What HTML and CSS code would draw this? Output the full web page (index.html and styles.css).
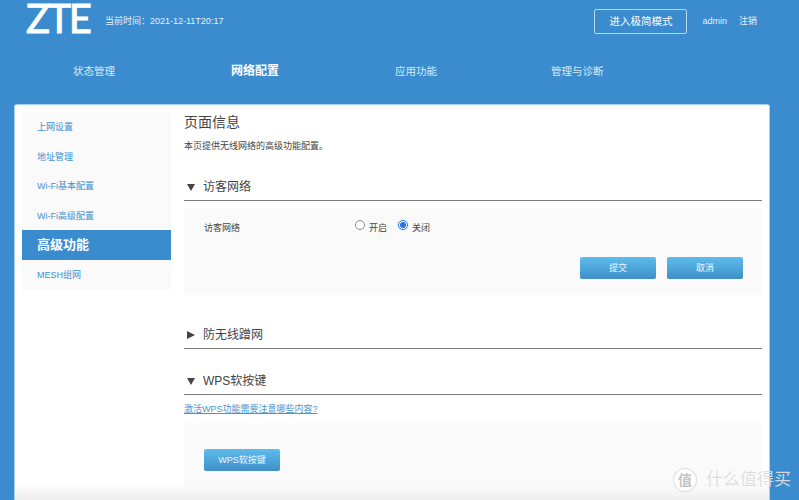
FILE: index.html
```html
<!DOCTYPE html>
<html lang="zh">
<head>
<meta charset="utf-8">
<title>ZTE</title>
<link rel="stylesheet" href="styles.css">
</head>
<body>
<div class="page">
  <header class="header">
    <div class="topbar">
      <div class="brand">
        <span class="logo">ZTE</span>
        <span class="time">当前时间：2021-12-11T20:17</span>
      </div>
      <div class="account">
        <span class="mode-btn">进入极简模式</span>
        <span class="user">admin</span>
        <span class="logout">注销</span>
      </div>
    </div>
    <nav class="nav">
      <span class="nav-item nav-1">状态管理</span>
      <span class="nav-item nav-2">网络配置</span>
      <span class="nav-item nav-3">应用功能</span>
      <span class="nav-item nav-4">管理与诊断</span>
    </nav>
  </header>
  <main class="card">
    <aside class="side">
      <a class="side-item">上网设置</a>
      <a class="side-item">地址管理</a>
      <a class="side-item">Wi-Fi基本配置</a>
      <a class="side-item">Wi-Fi高级配置</a>
      <a class="side-item current">高级功能</a>
      <a class="side-item">MESH组网</a>
    </aside>
    <section class="content">
      <h1 class="title">页面信息</h1>
      <p class="desc">本页提供无线网络的高级功能配置。</p>

      <h2 class="sec-head first"><span class="caret down"></span>访客网络</h2>
      <div class="panel guest">
        <div class="row">
          <span class="row-label">访客网络</span>
          <span class="radios">
            <span class="radio-wrap"><span class="radio"></span>开启</span>
            <span class="radio-wrap"><span class="radio on"></span>关闭</span>
          </span>
        </div>
        <div class="actions">
          <span class="btn">提交</span>
          <span class="btn">取消</span>
        </div>
      </div>

      <h2 class="sec-head second"><span class="caret right"></span>防无线蹭网</h2>

      <h2 class="sec-head third"><span class="caret down"></span>WPS软按键</h2>
      <a class="help">激活WPS功能需要注意哪些内容?</a>
      <div class="panel wps">
        <span class="btn">WPS软按键</span>
      </div>
    </section>
  </main>
  <div class="fade"></div>
  <div class="watermark"><span class="wm-badge">值</span><span class="wm-text">什么值得买</span></div>
</div>
</body>
</html>
```
FILE: styles.css
```css
* { box-sizing: border-box; }
html, body { margin: 0; height: 100%; overflow: hidden; }
body {
  background: #3a8ccf;
  font-family: "Liberation Sans", "Noto Sans CJK SC", sans-serif;
  color: #444;
}
.page { position: relative; width: 799px; height: 500px; overflow: hidden; }

.header { height: 105px; color: #fff; }
.topbar {
  height: 42px;
  display: flex;
  justify-content: space-between;
  padding: 0 42px 0 26px;
}
.brand { display: flex; align-items: flex-start; }
.logo {
  font-family: Lato, sans-serif;
  font-size: 40px;
  line-height: 36px;
  letter-spacing: -2.5px;
  width: 79px;
  font-weight: 400;
  -webkit-text-stroke: 0.9px #fff;
}
.time { font-size: 9px; line-height: 11px; margin-top: 16px; color: #e6f0f8; }
.account { display: flex; align-items: flex-start; font-size: 9px; line-height: 11px; }
.mode-btn {
  width: 93px;
  height: 25px;
  margin-top: 9px;
  margin-right: 15px;
  border: 1px solid #b9d8f0;
  border-radius: 2px;
  font-size: 10.5px;
  line-height: 23px;
  text-align: center;
}
.user { margin-top: 16px; margin-right: 12px; color: #e6f0f8; }
.logout { margin-top: 16px; color: #e6f0f8; }

.nav { display: flex; height: 63px; padding-top: 22px; font-size: 10.5px; line-height: 14px; color: #dbe9f5; }
.nav-item { display: block; }
.nav-1 { margin-left: 73px; }
.nav-2 { margin-left: 116px; font-size: 12px; font-weight: 700; color: #fff; }
.nav-3 { margin-left: 116px; }
.nav-4 { margin-left: 114px; }

.card {
  display: flex;
  margin-left: 14px;
  width: 756px;
  height: 395px;
  padding: 7px 8px 0;
  gap: 13px;
  background: #fff;
  border-radius: 3px 3px 0 0;
  box-shadow: inset 1px 0 0 #a5d2f0, inset -1px 0 0 #a5d2f0, 0 -1px 0 #a5d2f0;
}
.side {
  width: 149px;
  height: 178px;
  flex: none;
  background: #fafafa;
  display: flex;
  flex-direction: column;
}
.side-item {
  height: 29.5px;
  padding-left: 15px;
  padding-top: 1px;
  font-size: 9px;
  line-height: 29px;
  color: #3f8fd0;
}
.side-item.current {
  padding-top: 0;
  background: #3a8ccf;
  color: #fff;
  font-size: 13px;
  line-height: 29.5px;
  font-weight: 700;
}
.content { width: 578px; }
.title { margin: 0; font-size: 14px; line-height: 20px; font-weight: 400; color: #444; }
.desc { margin: 8px 0 0; font-size: 9px; line-height: 13px; color: #444; }
.sec-head {
  margin: 0;
  height: 24px;
  display: flex;
  align-items: flex-start;
  font-size: 12px;
  line-height: 20px;
  font-weight: 400;
  color: #444;
  border-bottom: 1px solid #7c7c7c;
}
.sec-head.first { margin-top: 24px; }
.sec-head.second { margin-top: 30px; }
.sec-head.third { margin-top: 22px; }
.caret {
  width: 8px;
  height: 7px;
  margin: 7px 8px 0 3px;
  background: #444;
}
.caret.down { clip-path: polygon(0 0, 100% 0, 50% 100%); }
.caret.right { height: 8px; margin-top: 6px; clip-path: polygon(0 0, 100% 50%, 0 100%); }
.panel { background: #fafafa; }
.guest { height: 87px; margin-top: 7px; padding: 14px 19px 0 20px; }
.row { display: flex; font-size: 9px; line-height: 13px; }
.row-label { width: 151px; }
.radios { display: flex; gap: 11px; }
.radio-wrap { display: flex; align-items: center; gap: 4px; }
.radio {
  width: 10px;
  height: 10px;
  margin-top: -8px;
  border-radius: 50%;
  background: #fff;
  border: 1px solid #8d8d8d;
}
.radio.on {
  border: 1px solid #2f73e0;
  background: radial-gradient(circle, #2f73e0 0 2.8px, #fff 3.2px);
  box-shadow: 0 0 2px #a9cdf5;
}
.actions { display: flex; justify-content: flex-end; gap: 11px; margin-top: 22px; }
.btn {
  display: block;
  width: 76px;
  height: 22px;
  border-radius: 2px;
  background: linear-gradient(#5dbcee, #3f8fc7);
  color: #f0f7fc;
  font-size: 9px;
  line-height: 22px;
  text-align: center;
}
.help { display: block; margin-top: 8px; font-size: 9px; line-height: 13px; color: #4595cf; text-decoration: underline; }
.wps { height: 64px; margin-top: 7px; padding: 26px 20px 0; }

.fade {
  position: absolute;
  left: 15px;
  width: 754px;
  bottom: 0;
  height: 17px;
  background: linear-gradient(rgba(238,238,238,0), #ededed);
}
.watermark {
  position: absolute;
  left: 673px;
  top: 468px;
  display: flex;
  align-items: center;
  gap: 9px;
}
.wm-badge {
  width: 24px;
  height: 24px;
  border-radius: 50%;
  border: 1px solid rgba(205,205,205,.7);
  background: rgba(255,255,255,.85);
  color: #c4c4c4;
  font-size: 14px;
  line-height: 22px;
  text-align: center;
  font-weight: 700;
}
.wm-text { font-size: 17px; line-height: 24px; color: rgba(222,222,222,.95); }
```
